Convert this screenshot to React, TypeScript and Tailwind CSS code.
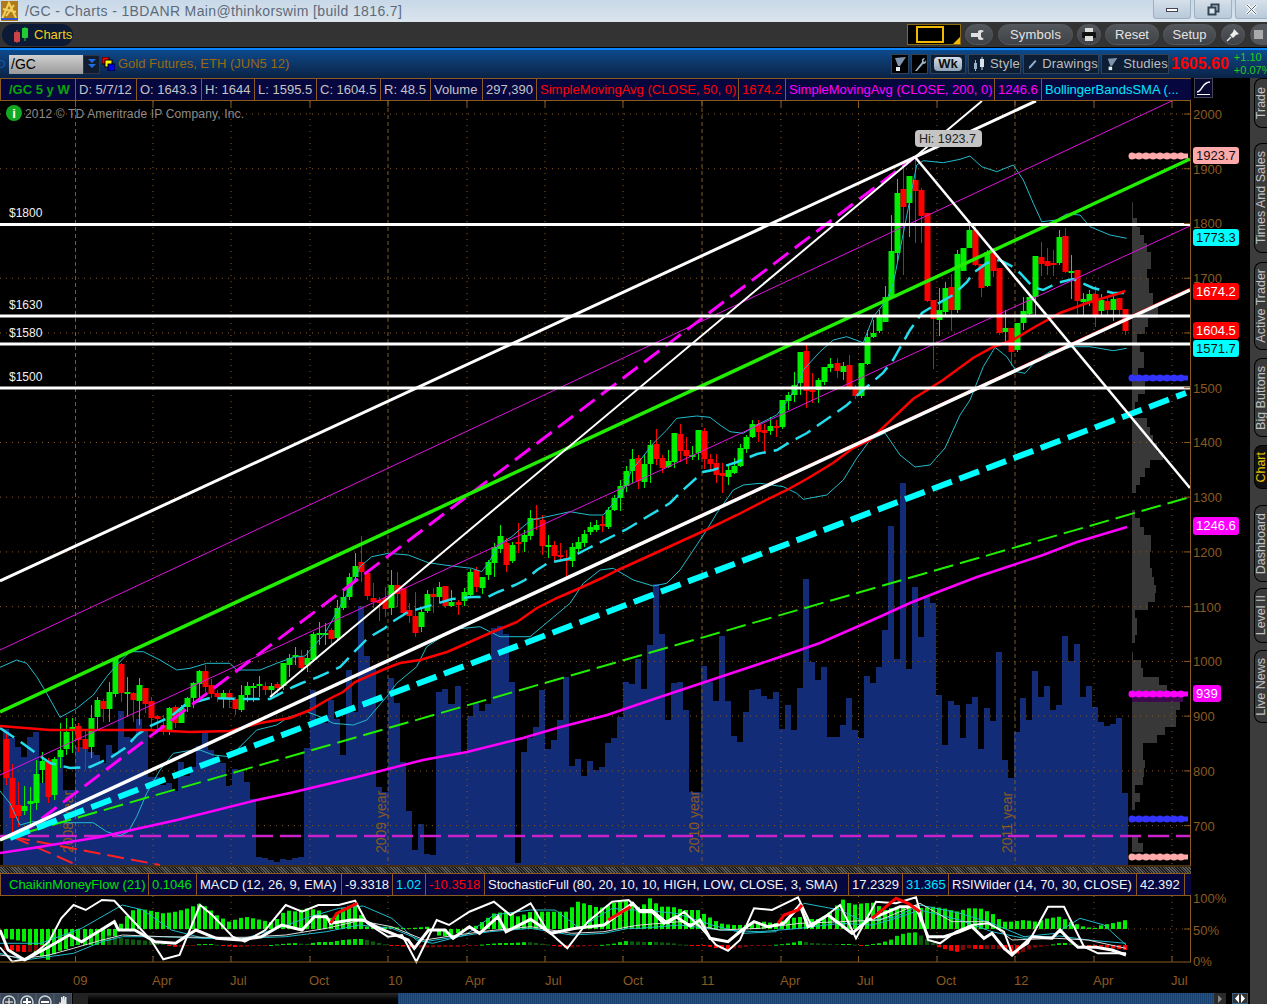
import type { ReactNode } from 'react'

// [up, bodyTop, bodyBottom, wickTop, wickBottom], one row per weekly bar, in screen y
const candles: number[][] = [
  [0,739,778,733,785],[0,778,818,764,833],[0,805,816,782,827],[1,806,811,786,815],[1,801,804,787,827],[1,774,803,760,810],
  [1,761,770,752,783],[0,760,797,758,803],[1,759,795,757,800],[1,750,757,723,768],[1,732,749,718,755],[1,727,731,718,753],
  [0,726,740,723,752],[0,739,749,730,770],[1,718,747,705,758],[1,700,717,697,730],[0,701,709,699,722],[1,692,709,682,722],
  [1,658,694,657,697],[0,664,693,663,702],[1,692,694,677,717],[0,693,700,692,722],[1,685,701,678,725],[0,688,704,688,713],
  [0,701,718,697,730],[0,716,719,715,733],[0,725,732,715,735],[1,708,732,707,735],[0,707,723,705,728],[1,708,723,705,723],
  [1,698,707,697,712],[1,683,698,682,708],[1,671,684,670,698],[0,671,687,665,692],[0,685,694,679,698],[0,693,697,690,702],
  [1,693,699,690,708],[0,693,699,690,708],[0,699,709,697,715],[1,695,710,685,712],[1,686,695,682,702],[1,686,688,683,702],
  [1,684,686,676,697],[0,686,690,682,695],[1,686,690,683,697],[0,684,688,682,697],[1,663,686,663,690],[1,658,665,654,677],
  [1,655,657,647,665],[0,657,668,650,672],[1,658,665,650,672],[1,634,660,632,662],[1,633,635,622,645],[1,633,635,623,645],
  [0,630,639,628,646],[1,608,638,600,640],[1,597,608,590,610],[1,577,597,573,600],[1,566,577,553,580],[0,562,572,536,582],
  [0,573,596,570,600],[0,598,602,583,608],[0,600,603,597,621],[0,598,609,587,617],[1,585,608,570,615],[0,585,594,572,607],
  [0,588,613,588,614],[0,610,616,603,623],[0,616,633,592,637],[1,612,627,608,632],[1,594,611,590,613],[0,594,597,588,613],
  [1,587,597,582,603],[0,586,606,586,608],[1,602,606,590,607],[0,602,605,600,615],[1,592,601,588,606],[1,572,595,569,597],
  [0,570,587,567,592],[1,577,588,577,594],[1,562,575,560,580],[1,547,563,543,577],[1,536,549,525,553],[0,543,565,538,572],
  [1,545,561,542,563],[0,542,543,523,553],[1,535,542,530,552],[1,518,536,510,540],[0,518,520,505,530],[0,520,546,515,555],
  [1,545,547,535,558],[0,545,556,541,562],[0,555,557,543,562],[0,558,561,550,577],[1,547,561,543,567],[1,542,549,537,552],
  [1,534,543,530,547],[1,527,532,522,535],[1,525,530,520,532],[0,524,526,516,532],[1,510,527,507,529],[1,498,510,495,511],
  [1,486,498,480,511],[1,471,486,466,492],[1,459,471,449,483],[0,458,481,455,489],[1,464,482,455,488],[1,445,464,440,483],
  [0,444,459,429,465],[0,458,468,455,473],[1,461,467,450,468],[1,433,462,433,468],[0,434,451,424,462],[0,450,456,437,464],
  [1,455,457,446,460],[1,430,453,430,460],[0,431,459,428,469],[0,459,464,454,470],[0,463,475,454,483],[0,473,476,463,493],
  [1,470,477,466,485],[1,466,473,458,474],[1,448,466,444,467],[1,437,449,435,453],[1,424,437,420,438],[0,424,432,420,442],
  [0,430,433,424,452],[1,426,431,417,435],[0,426,427,420,437],[1,400,427,400,429],[1,395,401,392,410],[1,385,395,372,402],
  [1,352,383,352,395],[0,351,391,345,408],[0,390,392,373,403],[1,380,390,378,403],[1,367,382,367,385],[1,364,368,358,372],
  [0,363,371,358,378],[1,366,372,362,380],[0,365,387,355,390],[0,389,396,385,399],[1,363,396,363,398],[1,337,364,330,365],
  [1,333,337,320,338],[1,317,331,310,333],[1,297,322,286,322],[1,251,298,215,298],[1,193,253,179,262],[0,189,207,167,275],
  [1,176,203,176,237],[0,180,191,159,243],[0,190,216,188,243],[0,213,301,213,302],[0,300,319,300,369],[1,310,320,288,336],
  [1,288,312,282,315],[0,287,310,274,331],[1,254,310,250,313],[1,248,271,248,271],[1,230,248,225,248],[0,230,265,225,266],
  [0,264,288,264,297],[1,252,286,250,287],[0,253,271,248,277],[0,268,333,268,335],[1,328,332,310,342],[0,328,352,328,366],
  [1,323,350,323,352],[1,311,323,297,330],[1,297,314,297,316],[1,256,297,256,315],[0,257,264,242,276],[0,261,266,248,275],
  [0,263,265,250,276],[1,237,263,230,265],[0,236,272,228,273],[1,271,273,255,299],[0,270,301,270,314],[1,299,302,293,315],
  [1,294,302,290,306],[0,294,315,286,327],[1,300,311,294,315],[0,301,310,298,315],[1,299,310,293,321],[0,298,310,298,316],
  [0,309,331,309,335],
]

const volumeTops: number[] = [
  729,738,747,757,737,732,783,763,766,757,790,790,747,748,752,755,763,745,753,711,737,738,719,730,777,777,785,783,791,762,776,767,
  746,733,750,757,763,786,769,771,782,799,857,858,860,862,859,860,858,857,748,690,719,723,700,719,755,670,712,606,656,668,787,792,
  678,703,762,811,850,824,854,855,692,689,704,686,752,716,703,711,704,628,626,634,682,863,752,738,727,690,749,740,720,677,766,759,
  776,761,770,767,743,738,717,682,684,659,689,645,584,634,720,683,682,710,792,792,666,682,701,
  636,701,736,742,712,690,689,696,699,692,729,705,730,688,579,662,680,667,737,737,725,698,730,738,676,683,667,630,526,659,483,669,
  587,637,597,603,695,745,701,705,738,704,697,749,708,721,652,760,778,732,698,720,671,697,686,710,705,636,661,644,697,686,707,722,
  726,724,718,793,
]

type P = [number, number]

const xOf = (k: number) => 6.3 + 6.016 * k
const scaled = (list: number[][], dx: number, sx: number, dy: number): P[] =>
  list.map(([c, p]) => [dx + c / sx, dy + p / 3])
const toPoints = (list: P[]) => list.map(([x, y]) => `${x.toFixed(1)},${y.toFixed(1)}`).join(' ')
const interp = (list: P[], x: number) => {
  if (x <= list[0][0]) return list[0][1]
  for (let i = 1; i < list.length; i++) {
    if (x <= list[i][0]) {
      const t = (x - list[i - 1][0]) / (list[i][0] - list[i - 1][0])
      return list[i - 1][1] + (list[i][1] - list[i - 1][1]) * t
    }
  }
  return list[list.length - 1][1]
}

const sma50: P[] = [
  [0,726],[50,730],[150,730],[190,732],[230,731],[260,723],[290,718],[310,710],[327,700],[343,692],[355,682],[387,668],[400,663],[420,660],
  [447,652],[463,645],[490,633],[517,622],[537,608],[557,598],[580,588],[602,578],[618,570],[640,560],[708,529],[737,515],[770,498],[787,490],
  [810,477],[833,463],[853,448],[870,440],[913,399],[943,380],[973,358],[993,347],[1013,340],[1033,328],[1060,313],[1087,303],[1117,294],[1125,291],
]
const sma200: P[] = [
  [0,853],[33,848],[100,837],[177,820],[257,800],[290,793],[357,777],[423,760],[467,752],[523,738],[557,728],[607,715],[657,698],[720,677],
  [777,658],[820,643],[877,618],[910,603],[943,590],[977,577],[1010,566],[1043,555],[1077,542],[1127,527],
]
const midBand: P[] = [
  [0,728],[18,740],[40,756],[50,763],[70,768],[90,767],[110,758],[125,748],[137,735],[150,726],[170,717],[185,705],[210,698],[240,699],[270,699],[293,687],
  [302,683],[318,677],[340,667],[358,648],[368,638],[385,628],[392,622],[408,612],[432,605],[452,599],[472,597],[488,597],[498,592],[515,585],[525,580],
  [537,570],[548,563],[568,559],[585,550],[627,529],[645,518],[662,508],[670,503],[683,490],[703,472],[713,470],[737,462],[757,454],[777,450],[790,442],
  [807,433],[830,417],[847,405],[863,390],[883,373],[893,360],[910,330],[922,313],[930,308],[953,295],[967,282],[973,273],[987,263],[1000,260],[1013,267],
  [1020,273],[1033,287],[1043,290],[1057,283],[1073,279],[1093,288],[1113,293],[1127,293],
]
const upperBand: P[] = [
  ...scaled([[0,82],[50,60],[80,70],[110,110],[140,160],[180,232],[230,205],[280,165],[320,110],[350,75],[390,35],[430,35],[480,60],[530,90],[570,85],[620,70],[690,70],[710,90],[780,90],[830,70],[880,52]], 0, 3, 640),
  ...scaled([[60,408],[120,340],[170,250],[200,200],[225,140],[260,110],[310,100],[370,105],[430,128],[500,138],[560,145],[590,155],[610,130],[640,75],[680,50],[720,15],[740,0]], 285, 3, 520),
  ...scaled([[0,545],[60,555],[100,555],[130,520],[160,480],[185,420],[215,385],[250,340],[290,300],[320,265],[380,258],[420,262],[450,285],[480,305],[520,310],[560,285],[620,255],[650,215],[680,170],[700,120],[750,65],[790,30],[830,20],[880,38]], 570, 3, 330),
  ...scaled([[40,530],[80,480],[100,430],[130,280],[170,75],[190,62],[250,68],[300,58],[330,48],[365,80],[410,95],[460,75],[490,120],[520,190],[545,245],[590,240],[620,222],[660,225],[690,260],[750,285],[800,295]], 860, 3, 140),
]
const lowerBand: P[] = [
  ...scaled([[0,453],[30,490],[60,555],[95,545],[190,548],[280,548],[320,575],[360,587],[385,575],[410,530],[440,460],[480,390],[520,340],[560,333],[600,330],[640,345],[690,350],[770,270],[830,255],[860,235]], 0, 3, 640),
  ...scaled([[0,470],[50,455],[90,470],[130,490],[190,495],[230,480],[290,410],[320,370],[380,320],[410,260],[490,208],[570,200],[630,230],[720,230],[780,180],[840,130],[880,70],[930,30],[970,25],[1030,60],[1090,78],[1130,70],[1170,30],[1190,0]], 290, 3, 560),
  ...scaled([[410,600],[440,550],[490,480],[520,465],[570,460],[640,470],[680,490],[700,508],[770,495],[820,450],[860,385],[900,330]], 570, 3, 330),
  [885,433],[900,455],[915,467],[930,465],[945,448],[960,415],[970,400],
  ...scaled([[370,680],[405,622],[440,650],[470,695],[495,700],[530,660],[570,635],[640,620],[690,620],[760,632],[800,625]], 860, 3, 140),
]

// lower study panel: zoom coordinates split in two halves of the window
const both = (left: number[][], right: number[][]): P[] => [...scaled(left, 0, 2.45, 860), ...scaled(right, 640, 2.5, 860)]

const cmf = both(
  [[10,235],[40,240],[60,245],[90,280],[118,300],[140,275],[170,265],[200,240],[240,235],[280,230],[300,180],[330,145],[360,150],[400,160],[430,155],[460,145],[490,130],[510,145],[530,165],[560,185],[600,170],[640,180],[670,188],[700,150],[720,155],[750,145],[780,150],[810,175],[840,145],[870,130],[900,200],[950,200],[1000,205],[1050,200],[1080,230],[1110,225],[1140,210],[1170,195],[1210,160],[1240,155],[1270,170],[1300,155],[1390,155],[1415,125],[1445,135],[1470,145],[1500,130],[1540,120]],
  [[0,145],[25,115],[50,140],[80,140],[110,150],[145,150],[165,165],[200,190],[230,195],[270,195],[310,185],[340,190],[370,175],[410,170],[440,180],[470,165],[505,118],[530,135],[555,130],[585,128],[610,150],[640,140],[660,145],[690,145],[730,140],[760,145],[790,155],[820,145],[850,145],[880,160],[905,185],[930,185],[960,180],[990,185],[1020,175],[1050,170],[1075,185],[1110,200],[1135,205],[1155,195],[1180,190],[1200,185],[1215,180]],
)
const macd: P[] = [
  ...[[25,-5],[50,-7],[75,-7],[100,-5],[120,4],[140,5],[200,8],[230,8],[260,10],[280,8],[310,6],[340,5],[370,4],[400,1],[430,-2],[460,-1],[490,1],[520,1],[570,-2],[590,-2],[620,-1],[650,-0.5],[690,1],[720,2],[750,1],[780,3],[810,3],[840,5],[870,6],[890,6],[920,3],[950,0],[980,-1],[1010,-3],[1050,-2.5],[1090,-2],[1120,-2],[1145,-1],[1195,1],[1225,2],[1255,2],[1290,3],[1315,2],[1360,-0.5],[1385,-3],[1410,-2],[1440,-1],[1500,1],[1530,4]].map(([c, v]): P => [c / 2.45, v]),
  ...[[10,3],[40,3],[80,2],[100,0.5],[160,-0.5],[190,-3],[220,-4],[250,-3],[280,-1],[350,0.5],[380,2],[400,4],[430,2],[480,1],[530,1],[550,-1],[580,1],[600,2],[625,5],[645,10],[665,12],[685,13],[700,10],[725,4],[745,-2],[760,-4],[780,-6],[795,-7],[820,-3],[840,-4],[905,-4],[920,-7],[935,-9],[960,-7],[980,-3],[1000,-2],[1050,2],[1075,2],[1100,0],[1140,-1],[1215,-5]].map(([c, v]): P => [640 + c / 2.5, v]),
]
const stoch = both(
  [[0,262],[30,305],[60,298],[90,275],[120,245],[150,175],[180,135],[210,150],[250,120],[280,122],[320,175],[370,240],[400,298],[440,285],[490,135],[520,165],[570,230],[600,245],[650,210],[700,135],[740,155],[780,135],[830,135],[870,122],[900,190],[950,230],[985,225],[1020,305],[1070,180],[1100,195],[1150,155],[1210,125],[1250,165],[1300,130],[1340,210],[1390,265],[1440,185],[1500,125],[1540,120]],
  [[0,150],[30,150],[70,190],[110,155],[150,200],[190,255],[220,272],[250,240],[285,145],[330,150],[395,112],[430,200],[500,135],[540,235],[590,125],[640,130],[690,112],[720,240],[750,250],[790,215],[830,195],[870,190],[910,215],[930,280],[970,250],[1020,140],[1060,140],[1110,260],[1145,280],[1180,280],[1215,280]],
)
const rsi = both(
  [[0,210],[20,270],[60,300],[120,260],[170,225],[200,245],[240,215],[280,185],[290,210],[330,210],[380,245],[430,250],[480,210],[530,235],[590,240],[640,230],[690,195],[740,210],[770,170],[800,170],[810,190],[860,180],[890,180],[930,205],[1000,240],[1015,265],[1050,210],[1090,210],[1110,235],[1150,200],[1175,220],[1220,170],[1240,215],[1300,178],[1350,220],[1410,205],[1480,195],[1550,130]],
  [[0,155],[30,155],[60,190],[90,170],[125,198],[150,180],[175,235],[220,245],[255,210],[285,185],[320,200],[360,190],[400,135],[420,200],[470,165],[530,220],[570,180],[650,140],[690,140],[720,230],[760,230],[800,215],[830,200],[860,235],[880,220],[910,265],[930,285],[980,230],[1030,235],[1050,210],[1070,235],[1095,262],[1140,262],[1180,270],[1215,285]],
)
const cyanA = both(
  [[0,250],[100,250],[200,205],[300,135],[350,150],[420,210],[500,235],[600,235],[680,205],[760,170],[830,145],[890,138],[960,175],[1020,240],[1060,250],[1140,225],[1210,165],[1300,150],[1360,150],[1420,205],[1500,145],[1540,150]],
  [[0,150],[90,160],[180,195],[260,220],[340,215],[410,130],[500,150],[560,185],[640,170],[700,135],[800,160],[880,190],[960,230],[1040,220],[1100,175],[1160,195],[1215,255]],
)
const cyanB = both(
  [[0,280],[60,300],[120,290],[180,280],[250,245],[300,230],[400,230],[500,235],[600,235],[700,230],[800,215],[880,195],[960,205],[1040,245],[1120,230],[1200,215],[1300,205],[1400,225],[1480,220],[1540,205]],
  [[0,205],[100,195],[200,210],[300,215],[400,205],[500,190],[580,195],[640,175],[700,150],[800,180],[880,215],[960,235],[1050,228],[1120,240],[1215,250]],
)
const thinWhite = both(
  [[0,285],[60,295],[120,285],[180,265],[250,240],[300,225],[400,230],[500,232],[600,232],[700,225],[800,205],[880,182],[960,200],[1040,240],[1120,225],[1200,212],[1300,200],[1400,220],[1480,215],[1540,200]],
  [[0,195],[100,185],[200,210],[300,205],[400,190],[500,185],[600,180],[700,130],[780,185],[870,185],[930,240],[1040,235],[1120,240],[1215,265]],
)
const redRuns: P[][] = [
  scaled([[810,190],[825,160],[875,130]], 0, 2.45, 860),
  scaled([[1490,180],[1545,140]], 0, 2.45, 860),
  scaled([[345,190],[360,165],[395,150],[405,135]], 640, 2.5, 860),
  scaled([[580,175],[640,115],[670,130],[700,155]], 640, 2.5, 860),
]

// volume profile at the right edge of the price panel: [top, bottom, right]
const profile: number[][] = [
  [202,218,1133],[218,227,1137],[227,235,1140],[235,243,1144],[243,252,1147],[252,260,1151],[260,269,1151],[269,278,1147],[278,293,1149],[293,305,1153],[305,318,1158],
  [318,327,1148],[327,334,1145],[334,343,1137],[343,352,1140],[352,368,1144],[368,377,1138],[377,394,1145],[394,402,1138],[402,410,1135],[418,427,1147],[427,435,1150],
  [435,443,1153],[443,452,1157],[452,460,1163],[460,468,1150],[468,477,1145],[477,485,1140],[485,493,1136],[510,518,1135],[518,527,1140],[527,535,1144],[535,552,1151],
  [552,568,1150],[568,577,1152],[577,585,1154],[585,593,1156],[593,602,1155],[602,610,1148],[610,618,1135],[618,635,1137],[635,643,1135],[652,660,1133],[660,668,1141],
  [668,677,1143],[677,685,1159],[685,693,1167],[701,710,1180],[710,718,1176],[718,727,1176],[727,735,1165],[735,743,1157],[743,760,1143],[760,768,1145],[768,777,1144],
  [777,785,1143],[785,793,1135],[793,802,1140],[802,810,1135],[837,843,1138],[843,852,1143],
]

const gridX = [75.5, 153, 231, 310, 388, 467, 545, 623, 702, 781, 858.5, 937, 1015, 1094, 1172]
const yearX = [75.5, 388, 702, 1015]
const priceLevels = [2000, 1900, 1800, 1700, 1600, 1500, 1400, 1300, 1200, 1100, 1000, 900, 800, 700]
const yOfPrice = (p: number) => 114 + (2000 - p) * 0.5474

const badges = [
  { y: 147, h: 17, w: 46, bg: '#ffaaaa', fg: '#111', label: '1923.7' },
  { y: 229, h: 17, w: 46, bg: '#00ffff', fg: '#111', label: '1773.3' },
  { y: 283, h: 17, w: 46, bg: '#ff0000', fg: '#fff', label: '1674.2' },
  { y: 322, h: 17, w: 46, bg: '#ff0000', fg: '#fff', label: '1604.5' },
  { y: 340, h: 17, w: 46, bg: '#00ffff', fg: '#111', label: '1571.7' },
  { y: 517, h: 18, w: 46, bg: '#ff00ff', fg: '#fff', label: '1246.6' },
  { y: 685, h: 17, w: 28, bg: '#ff00ff', fg: '#fff', label: '939' },
]
const dotRows = [
  { y: 156, color: '#ffaaaa' },
  { y: 378, color: '#3333ff' },
  { y: 694, color: '#ff00ff' },
  { y: 819, color: '#3333ff' },
  { y: 857, color: '#ffaaaa' },
]
const levelLabels = [
  { y: 217, label: '$1800' },
  { y: 309, label: '$1630' },
  { y: 337, label: '$1580' },
  { y: 381, label: '$1500' },
]

function Cell({ className, children }: { className: string; children: ReactNode }) {
  return (
    <div className={`flex h-full shrink-0 items-center whitespace-nowrap border-r border-[#8a5a20] pl-[3px] text-[13px] ${className}`}>
      {children}
    </div>
  )
}

function Pill({ className, children }: { className: string; children: ReactNode }) {
  return (
    <div className={`flex h-[21px] shrink-0 items-center justify-center rounded-full border border-[#55595f] bg-gradient-to-b from-[#53565b] to-[#3f4246] text-[13px] text-[#e4e4e4] ${className}`}>
      {children}
    </div>
  )
}

function ToolButton({ className, children }: { className: string; children: ReactNode }) {
  return (
    <div className={`flex h-[20px] shrink-0 items-center gap-[5px] border border-[#2f4258] bg-[#0d1d33] pl-[4px] text-[13px] tracking-[0.2px] text-[#bdbdbd] ${className}`}>
      {children}
    </div>
  )
}

function SideTab({ className, active, label }: { className: string; active?: boolean; label: string }) {
  return (
    <div className={`ml-[4px] flex w-[13px] shrink-0 items-center justify-center rounded-l-lg border-y border-l border-black ${active ? 'bg-[#111]' : 'bg-[#3a3a3a]'} ${className}`}>
      <span className={`rotate-180 whitespace-nowrap text-[12.5px] leading-none [writing-mode:vertical-rl] ${active ? 'text-[#e8c400]' : 'text-[#c2c2c2]'}`}>
        {label}
      </span>
    </div>
  )
}

function StudyIcon() {
  return (
    <svg width="14" height="16" viewBox="0 0 14 16">
      <path d="M2 2 L13 1 L7 10 L5 10 Z" fill="#7f95ad" />
      <rect x="3" y="11" width="4" height="4" fill="#e6eef2" />
    </svg>
  )
}

function PriceChart() {
  return (
    <svg className="block shrink-0" width={1250} height={766} viewBox="0 101 1250 766" fontFamily="Liberation Sans">
      {/* volume */}
      {volumeTops.map((top, k) => {
        const x = Math.round(xOf(k) - 3)
        return <rect key={k} x={x} y={top} width={Math.round(xOf(k + 1) - 3) - x} height={865 - top} fill="#122c78" />
      })}
      {/* profile */}
      {profile.map(([t, b, r]) => (
        <rect key={t} x={1132} y={t} width={r - 1132} height={b - t} fill="#383838" />
      ))}
      <rect x={1132} y={694} width={51} height={8} fill="#3d0b4d" />
      {/* grid */}
      {priceLevels.map((p) => (
        <line key={p} x1={0} x2={1190} y1={yOfPrice(p)} y2={yOfPrice(p)} stroke="#8a5a20" strokeDasharray="1 5" />
      ))}
      {gridX.map((x) => (
        <g key={x}>
          <line x1={x} x2={x} y1={101} y2={865} stroke={yearX.includes(x) ? '#7a5a28' : '#8a5a20'} strokeDasharray={yearX.includes(x) ? '4 3' : '1 5'} />
          <line x1={x} x2={x} y1={101} y2={107} stroke="#8a5a20" />
        </g>
      ))}
      {/* year marks */}
      {[
        { x: 73, label: '2008 year' },
        { x: 386, label: '2009 year' },
        { x: 699, label: '2010 year' },
        { x: 1012, label: '2011 year' },
      ].map((m) => (
        <text key={m.x} x={m.x} y={853} fontSize={14} fill="#8a5a20" transform={`rotate(-90 ${m.x} 853)`}>
          {m.label}
        </text>
      ))}
      <line x1={0} x2={1190} y1={836} y2={836} stroke="#cc22cc" strokeWidth={2.5} strokeDasharray="21 7" />
      <polyline points="13,837 77,865" fill="none" stroke="#ff2020" strokeWidth={2} strokeDasharray="17 7" />
      <polyline points="13,837 160,865" fill="none" stroke="#ff2020" strokeWidth={2} strokeDasharray="17 7" />
      {/* bars */}
      {candles.map(([up, top, bottom, wickTop, wickBottom], k) => {
        const color = up ? '#00ee00' : '#ff0000'
        const x = Math.round(xOf(k))
        return (
          <g key={k}>
            <rect x={x} y={wickTop} width={1} height={wickBottom - wickTop} fill={color} />
            <rect x={x - 2.5} y={top} width={6} height={Math.max(bottom - top, 2)} fill={color} />
          </g>
        )
      })}
      {/* studies */}
      <polyline points={toPoints(upperBand)} fill="none" stroke="#22bbcc" strokeWidth={1} />
      <polyline points={toPoints(lowerBand)} fill="none" stroke="#22bbcc" strokeWidth={1} />
      <polyline points={toPoints(midBand)} fill="none" stroke="#22ddee" strokeWidth={2.5} strokeDasharray="17 8" />
      <polyline points={toPoints(sma50)} fill="none" stroke="#ff0000" strokeWidth={2.5} />
      <polyline points={toPoints(sma200)} fill="none" stroke="#ff00ff" strokeWidth={2.5} />
      {/* channels */}
      <line x1={0} y1={650} x2={1178} y2={98} stroke="#dd11dd" strokeWidth={1} />
      <line x1={0} y1={775} x2={1190} y2={226} stroke="#dd11dd" strokeWidth={1} />
      <line x1={20} y1={835} x2={915} y2={157} stroke="#ff00ff" strokeWidth={3} strokeDasharray="19 8" />
      <line x1={0} y1={840} x2={1190} y2={497} stroke="#22ee00" strokeWidth={2} strokeDasharray="20 7" />
      <line x1={10} y1={838} x2={1186} y2={393} stroke="#00ffff" strokeWidth={6} strokeDasharray="21 8" />
      <line x1={0} y1={712} x2={1190} y2={159} stroke="#22ee00" strokeWidth={3.5} />
      <line x1={0} y1={581} x2={1036} y2={101} stroke="#ffffff" strokeWidth={3} />
      <line x1={270} y1={697} x2={982} y2={101} stroke="#ffffff" strokeWidth={2} />
      <line x1={600} y1={562} x2={1190} y2={288.5} stroke="#ff0000" strokeWidth={1.5} />
      <line x1={0} y1={840} x2={1190} y2={290} stroke="#ffffff" strokeWidth={3.5} />
      <line x1={915} y1={157} x2={1190} y2={488} stroke="#ffffff" strokeWidth={2.5} />
      {/* levels */}
      {[224.5, 316, 344, 388].map((y) => (
        <line key={y} x1={0} x2={1190} y1={y} y2={y} stroke="#ffffff" strokeWidth={3} />
      ))}
      {levelLabels.map((l) => (
        <text key={l.label} x={9} y={l.y} fontSize={12} fill="#f0f0f0">
          {l.label}
        </text>
      ))}
      {/* copyright */}
      <circle cx={14} cy={113} r={8} fill="#11a822" />
      <text x={14} y={118} fontSize={13} fontWeight={700} fill="#fff" textAnchor="middle">i</text>
      <text x={25} y={118} fontSize={12} fill="#8c8c8c" letterSpacing={0.15}>2012 © TD Ameritrade IP Company, Inc.</text>
      {/* high marker */}
      <rect x={915} y={130} width={67} height={17} rx={4} fill="#c4c4c4" />
      <text x={919} y={143} fontSize={12.5} fill="#222">Hi: 1923.7</text>
      {/* axis */}
      <line x1={1190.5} x2={1190.5} y1={101} y2={866} stroke="#8a5a20" />
      <line x1={0} x2={1191} y1={866} y2={866} stroke="#8a5a20" />
      {priceLevels.map((p) => (
        <g key={p}>
          <line x1={1184} x2={1190} y1={yOfPrice(p)} y2={yOfPrice(p)} stroke="#8a5a20" />
          <text x={1193} y={yOfPrice(p) + 5} fontSize={13} fill="#8a5a20">{p}</text>
        </g>
      ))}
      {dotRows.map((d) => (
        <line key={d.y} x1={1132} x2={1188} y1={d.y} y2={d.y} stroke={d.color} strokeWidth={7} strokeLinecap="round" strokeDasharray="0 7" />
      ))}
      {dotRows.map((d) => (
        <line key={d.y} x1={1132} x2={1188} y1={d.y} y2={d.y} stroke={d.color} strokeWidth={5} />
      ))}
      {badges.map((b) => (
        <g key={b.label}>
          <rect x={1193} y={b.y} width={b.w} height={b.h} rx={3} fill={b.bg} />
          <text x={1196} y={b.y + 13} fontSize={13} fill={b.fg}>{b.label}</text>
        </g>
      ))}
    </svg>
  )
}

function StudyPanel() {
  const bottomLabels = [
    { x: 73, label: '09' }, { x: 152, label: 'Apr' }, { x: 230, label: 'Jul' }, { x: 309, label: 'Oct' }, { x: 388, label: '10' },
    { x: 465, label: 'Apr' }, { x: 545, label: 'Jul' }, { x: 623, label: 'Oct' }, { x: 701, label: '11' }, { x: 780, label: 'Apr' },
    { x: 857, label: 'Jul' }, { x: 936, label: 'Oct' }, { x: 1014, label: '12' }, { x: 1093, label: 'Apr' }, { x: 1171, label: 'Jul' },
  ]
  return (
    <svg className="block shrink-0 overflow-visible" width={1250} height={97} viewBox="0 896 1250 97" fontFamily="Liberation Sans">
      <line x1={0} x2={1190} y1={929} y2={929} stroke="#8a5a20" strokeDasharray="1 5" />
      {gridX.map((x) => (
        <line key={x} x1={x} x2={x} y1={896} y2={962} stroke="#8a5a20" strokeDasharray="1 5" />
      ))}
      {candles.map((_, k) => {
        const x = xOf(k)
        const top = interp(cmf, x)
        return <rect key={k} x={Math.round(x) - 2} y={Math.min(top, 929)} width={4} height={Math.abs(top - 929)} fill="#00ee00" />
      })}
      {candles.map((_, k) => {
        const x = xOf(k)
        const v = interp(macd, x)
        const rising = v >= interp(macd, x - 6)
        const color = v >= 0 ? (rising ? '#00dd00' : '#0b5a0b') : rising ? '#7a0606' : '#ff0000'
        const h = Math.abs(v)
        return <rect key={k} x={Math.round(x) - 2} y={v >= 0 ? 945 - h : 945} width={4} height={Math.max(h, 1)} fill={color} />
      })}
      <polyline points={toPoints(cyanA)} fill="none" stroke="#22bbcc" strokeWidth={1} />
      <polyline points={toPoints(cyanB)} fill="none" stroke="#22bbcc" strokeWidth={1} />
      <polyline points={toPoints(thinWhite)} fill="none" stroke="#dddddd" strokeWidth={1} />
      <polyline points={toPoints(stoch)} fill="none" stroke="#ffffff" strokeWidth={2} />
      <polyline points={toPoints(rsi)} fill="none" stroke="#ffffff" strokeWidth={3} />
      {redRuns.map((run, i) => (
        <polyline key={i} points={toPoints(run)} fill="none" stroke="#ff0000" strokeWidth={3} />
      ))}
      <line x1={1190.5} x2={1190.5} y1={896} y2={962} stroke="#8a5a20" />
      <line x1={0} x2={1191} y1={962} y2={962} stroke="#8a5a20" />
      <line x1={1184} x2={1190} y1={929} y2={929} stroke="#8a5a20" />
      <text x={1193} y={903} fontSize={13} fill="#8a5a20">100%</text>
      <text x={1193} y={935} fontSize={13} fill="#8a5a20">50%</text>
      <text x={1193} y={966} fontSize={13} fill="#8a5a20">0%</text>
      {gridX.map((x) => (
        <line key={x} x1={x} x2={x} y1={956} y2={962} stroke="#8a5a20" />
      ))}
      {bottomLabels.map((l) => (
        <text key={l.x} x={l.x} y={985} fontSize={13} fill="#8a5a20">{l.label}</text>
      ))}
    </svg>
  )
}

function ScrollIcon({ kind }: { kind: 'cross' | 'plus' | 'minus' | 'hand' }) {
  return (
    <div className="flex h-[15px] w-[18px] shrink-0 items-start justify-center border border-[#445466] bg-[#3c4652] pt-[1px]">
      <svg width="14" height="14" viewBox="0 0 14 14">
        {kind === 'hand' ? (
          <path d="M4 13 L3 7 L5 8 L5 2 H6.5 V6 L7 1 H8.5 V6 L9 2 H10.5 V8 L11 13 Z" fill="#e8e8e8" />
        ) : (
          <>
            <circle cx="7" cy="7" r="6" fill="none" stroke="#c8d4e0" strokeWidth="1.5" />
            {kind !== 'minus' && <path d="M7 3 V11" stroke="#fff" strokeWidth={kind === 'plus' ? 2 : 1} />}
            <path d="M3 7 H11" stroke="#fff" strokeWidth={kind === 'cross' ? 1 : 2} />
          </>
        )}
      </svg>
    </div>
  )
}

export default function App() {
  return (
    <div className="flex h-[1004px] w-[1267px] flex-col overflow-hidden bg-black font-['Liberation_Sans',sans-serif]">
      {/* window title */}
      <div className="flex h-[22px] shrink-0 items-center bg-gradient-to-b from-[#c8d8e8] to-[#dbe5ee]">
        <svg className="ml-[1px] shrink-0" width="17" height="20" viewBox="0 0 17 20">
          <rect width="17" height="20" fill="#b07a18" />
          <path d="M1 18 L8 2 L15 17 M2 8 L15 11 M5 15 L13 4" stroke="#f2d060" strokeWidth="2" fill="none" />
          <path d="M0 18 L17 18" stroke="#3355cc" strokeWidth="2" />
        </svg>
        <span className="ml-[7px] text-[14px] tracking-[0.36px] text-[#5c6b7a]">/GC - Charts - 1BDANR Main@thinkorswim [build 1816.7]</span>
        <div className="ml-auto flex h-full items-start gap-[3px]">
          <div className="flex h-[19px] w-[38px] items-center justify-center rounded-b-[3px] border-x border-b border-[#9fb0c2] bg-gradient-to-b from-[#d5e0ea] to-[#b9c9d9]">
            <span className="mt-[2px] h-[4px] w-[12px] border border-[#445] bg-white" />
          </div>
          <div className="flex h-[19px] w-[38px] items-center justify-center rounded-b-[3px] border-x border-b border-[#9fb0c2] bg-gradient-to-b from-[#d5e0ea] to-[#b9c9d9]">
            <svg width="13" height="13" viewBox="0 0 13 13">
              <rect x="4.5" y="1.5" width="7" height="7" fill="none" stroke="#345" strokeWidth="2" />
              <rect x="1.5" y="4.5" width="7" height="7" fill="#dbe5ee" stroke="#345" strokeWidth="2" />
            </svg>
          </div>
          <div className="flex h-[19px] w-[32px] items-center justify-center rounded-bl-[3px] border-b border-l border-[#9fb0c2] bg-gradient-to-b from-[#d5e0ea] to-[#b9c9d9]">
            <svg width="13" height="13" viewBox="0 0 13 13">
              <path d="M2 2 L11 11 M11 2 L2 11" stroke="#fff" strokeWidth="3" />
              <path d="M2 2 L11 11 M11 2 L2 11" stroke="#567" strokeWidth="1" />
            </svg>
          </div>
        </div>
      </div>

      {/* main toolbar */}
      <div className="flex h-[25px] shrink-0 items-center bg-[#333333]">
        <div className="ml-[2px] flex h-[22px] w-[74px] items-center rounded-full bg-[#0c1a36]">
          <svg className="ml-[11px]" width="16" height="16" viewBox="0 0 16 16">
            <rect x="9" y="1" width="6" height="10" rx="1" fill="#22cc33" />
            <rect x="11.5" y="0" width="1" height="14" fill="#22cc33" />
            <rect x="1" y="5" width="6" height="10" rx="1" fill="#cc4444" />
            <rect x="3.5" y="3" width="1" height="13" fill="#cc4444" />
          </svg>
          <span className="ml-[5px] text-[13px] text-[#f5cf12]">Charts</span>
        </div>
        <div className="relative ml-[834px] flex h-[21px] w-[54px] shrink-0 items-center border border-[#8a6a10] bg-black">
          <div className="ml-[8px] h-[17px] w-[28px] border-2 border-[#f5b800]" />
          <svg className="absolute bottom-0 right-0" width="7" height="7" viewBox="0 0 7 7">
            <path d="M7 0 L7 7 L0 7 Z" fill="#f5b800" />
          </svg>
        </div>
        <Pill className="ml-[4px] w-[28px]">
          <svg width="16" height="10" viewBox="0 0 16 10">
            <path d="M0 3 H7 V1 Q10 -1 13 1 L10 3 L10 7 L13 9 Q10 11 7 9 V7 H0 Z" fill="#e0e0e0" />
          </svg>
        </Pill>
        <Pill className="ml-[5px] w-[75px] tracking-[0.2px]">Symbols</Pill>
        <Pill className="ml-[4px] w-[24px]">
          <svg width="14" height="13" viewBox="0 0 14 13">
            <rect x="3" y="0" width="8" height="4" fill="#ddd" />
            <rect x="0" y="4" width="14" height="6" rx="1" fill="#111" />
            <rect x="3" y="8" width="8" height="5" fill="#ddd" />
          </svg>
        </Pill>
        <Pill className="ml-[4px] w-[54px]">Reset</Pill>
        <Pill className="ml-[4px] w-[53px]">Setup</Pill>
        <Pill className="ml-[5px] w-[24px]">
          <svg width="14" height="14" viewBox="0 0 14 14">
            <path d="M8 1 L13 6 L10 7 L7 10 L4 7 L7 4 Z" fill="#eee" />
            <path d="M5 9 L1 13" stroke="#eee" strokeWidth="1.5" />
          </svg>
        </Pill>
        <div className="ml-[5px] flex h-[21px] w-[17px] shrink-0 items-center justify-center rounded-l-full bg-[#53565b]">
          <span className="block h-[9px] w-[9px] bg-[#aaa]" />
        </div>
      </div>
      <div className="h-[1px] shrink-0 bg-black" />
      <div className="h-[2px] shrink-0 bg-[#0a84ff]" />

      {/* symbol bar */}
      <div className="flex h-[28px] shrink-0 items-center bg-gradient-to-b from-[#0c4a8c] to-[#0a2346]">
        <span className="ml-[-3px] h-[8px] w-[8px] shrink-0 rounded-full border border-[#1a5bb0]" />
        <div className="ml-[4px] flex h-[19px] w-[74px] shrink-0 items-center bg-gradient-to-b from-[#cfcfcf] to-[#9a9a9a] pl-[2px] text-[14px] text-black">/GC</div>
        <div className="flex h-[19px] w-[17px] shrink-0 flex-col items-center justify-center border border-[#334] bg-[#111c30]">
          <svg width="10" height="12" viewBox="0 0 10 12">
            <path d="M1 1 H9 L5 5 Z M1 6 H9 L5 10 Z" fill="#1f6fe0" />
          </svg>
        </div>
        <svg className="ml-[2px] shrink-0" width="13" height="14" viewBox="0 0 13 14">
          <rect x="0" y="0" width="7" height="7" fill="#ff0000" stroke="#000" />
          <rect x="3" y="3" width="7" height="7" fill="#ffff00" stroke="#000" />
          <rect x="6" y="7" width="7" height="7" fill="#0000ee" stroke="#000" />
        </svg>
        <span className="ml-[3px] w-[170px] shrink-0 whitespace-nowrap text-[13px] text-[#9a6a10]">Gold Futures, ETH (JUN5 12)</span>
        <div className="ml-[603px] flex items-center gap-[2px]">
          <ToolButton className="w-[18px] bg-[#000] !pl-[1px]"><StudyIcon /></ToolButton>
          <ToolButton className="w-[17px] bg-[#000] !pl-[1px]">
            <svg width="14" height="15" viewBox="0 0 14 15">
              <path d="M2 14 L9 5 Q8 1 12 1 L10 4 L12 5 L13 3 Q14 7 10 7 L4 14 Z" fill="#9bb4cc" />
            </svg>
          </ToolButton>
          <div className="flex h-[20px] w-[36px] shrink-0 items-center justify-center border border-[#2f4258] bg-[#0d1d33]">
            <span className="rounded-[4px] bg-gradient-to-b from-[#d5dfe8] to-[#8ea4b8] px-[4px] text-[13px] font-bold leading-[14px] text-[#111]">Wk</span>
          </div>
          <ToolButton className="w-[53px]">
            <svg width="12" height="15" viewBox="0 0 12 15">
              <rect x="1" y="6" width="3" height="6" fill="#9bb4cc" /><rect x="2" y="3" width="1" height="11" fill="#9bb4cc" />
              <rect x="7" y="2" width="4" height="8" fill="#d9e2ea" /><rect x="8.5" y="0" width="1" height="13" fill="#d9e2ea" />
            </svg>
            Style
          </ToolButton>
          <ToolButton className="w-[76px]">
            <svg width="13" height="15" viewBox="0 0 13 15">
              <path d="M1 14 L2 10 L10 1 L12 3 L4 12 Z" fill="#8fb0d0" />
            </svg>
            Drawings
          </ToolButton>
          <ToolButton className="w-[68px]"><StudyIcon />Studies</ToolButton>
        </div>
        <span className="ml-[2px] text-[16px] font-bold text-[#ff0000]">1605.60</span>
        <div className="ml-[5px] flex flex-col text-[11px] leading-[13px] text-[#22cc22]">
          <span>+1.10</span>
          <span>+0.07%</span>
        </div>
      </div>

      <div className="flex min-h-0 flex-1">
        <div className="flex w-[1250px] shrink-0 flex-col">
          {/* study header */}
          <div className="flex h-[23px] shrink-0">
            <div className="flex h-full w-[1191px] shrink-0 border-y border-l border-[#8a5a20] bg-[#070740]">
              <Cell className="w-[75px] !pl-[8px] font-bold text-[#0aa30a]">/GC 5 y W</Cell>
              <Cell className="w-[61px] text-[#c4c4c4]">D: 5/7/12</Cell>
              <Cell className="w-[65px] text-[#c4c4c4]">O: 1643.3</Cell>
              <Cell className="w-[53px] text-[#c4c4c4]">H: 1644</Cell>
              <Cell className="w-[62px] text-[#c4c4c4]">L: 1595.5</Cell>
              <Cell className="w-[64px] text-[#c4c4c4]">C: 1604.5</Cell>
              <Cell className="w-[50px] text-[#c4c4c4]">R: 48.5</Cell>
              <Cell className="w-[52px] text-[#c4c4c4]">Volume</Cell>
              <Cell className="w-[54px] text-[#c4c4c4]">297,390</Cell>
              <Cell className="w-[202px] text-[#ff0000]">SimpleMovingAvg (CLOSE, 50, 0)</Cell>
              <Cell className="w-[47px] text-[#ff0000]">1674.2</Cell>
              <Cell className="w-[209px] text-[#ff00ff]">SimpleMovingAvg (CLOSE, 200, 0)</Cell>
              <Cell className="w-[47px] text-[#ff00ff]">1246.6</Cell>
              <Cell className="flex-1 border-r-0 text-[#00e5ff]">BollingerBandsSMA (...</Cell>
            </div>
            <div className="ml-[3px] flex h-[20px] w-[19px] items-center justify-center border border-[#445] bg-[#070730]">
              <svg width="15" height="16" viewBox="0 0 15 16">
                <path d="M1 12 C6 12 6 2 14 2" stroke="#fff" strokeWidth="1.5" fill="none" />
                <path d="M1 14.5 H14" stroke="#fff" strokeWidth="1" />
              </svg>
            </div>
          </div>

          <PriceChart />

          <div className="h-[6px] w-[1191px] shrink-0 bg-[repeating-linear-gradient(45deg,#5a5a5a_0,#5a5a5a_1px,#1c1c1c_1px,#1c1c1c_2px)]" />

          <div className="flex h-[23px] w-[1191px] shrink-0 border-y border-l border-[#8a5a20] bg-[#070740]">
            <Cell className="w-[148px] !pl-[8px] text-[#00e000]">ChaikinMoneyFlow (21)</Cell>
            <Cell className="w-[48px] text-[#00e000]">0.1046</Cell>
            <Cell className="w-[145px] text-[#f2f2f2]">MACD (12, 26, 9, EMA)</Cell>
            <Cell className="w-[51px] text-[#f2f2f2]">-9.3318</Cell>
            <Cell className="w-[33px] text-[#00e5ff]">1.02</Cell>
            <Cell className="w-[59px] text-[#ff0000]">-10.3518</Cell>
            <Cell className="w-[364px] text-[#f2f2f2]">StochasticFull (80, 20, 10, 10, HIGH, LOW, CLOSE, 3, SMA)</Cell>
            <Cell className="w-[54px] text-[#f2f2f2]">17.2329</Cell>
            <Cell className="w-[46px] text-[#00e5ff]">31.365</Cell>
            <Cell className="w-[188px] text-[#f2f2f2]">RSIWilder (14, 70, 30, CLOSE)</Cell>
            <Cell className="w-[48px] text-[#f2f2f2]">42.392</Cell>
          </div>

          <StudyPanel />

          {/* scroller */}
          <div className="flex h-[11px] shrink-0 overflow-hidden">
            <div className="flex h-full w-[73px] shrink-0 items-start">
              <ScrollIcon kind="cross" />
              <ScrollIcon kind="plus" />
              <ScrollIcon kind="minus" />
              <ScrollIcon kind="hand" />
            </div>
            <div className="h-full w-[15px] shrink-0 bg-[#222]" />
            <div className="h-full w-[310px] shrink-0 bg-gradient-to-b from-[#2a2a2a] to-black" />
            <div className="h-full w-[816px] shrink-0 bg-[repeating-linear-gradient(90deg,#1a4270_0,#1a4270_1px,#24527f_1px,#24527f_2px)]" />
            <div className="flex h-full w-[12px] shrink-0 items-center justify-center bg-[#2a2a2a]">
              <span className="h-0 w-0 border-y-[4px] border-l-[4px] border-y-transparent border-l-[#888]" />
            </div>
            <div className="ml-[6px] flex h-full w-[16px] shrink-0 items-center justify-center border border-[#3a5a7a] bg-[#333]">
              <svg width="10" height="9" viewBox="0 0 10 9">
                <path d="M4 0 L0 4.5 L4 9 Z M6 0 L10 4.5 L6 9 Z" fill="#fff" />
              </svg>
            </div>
          </div>
        </div>

        {/* side tabs */}
        <div className="flex w-[17px] shrink-0 flex-col bg-[#3c3c3c]">
          <SideTab className="h-[50px]" label="Trade" />
          <SideTab className="mt-[15px] h-[110px]" label="Times And Sales" />
          <SideTab className="mt-[9px] h-[88px]" label="Active Trader" />
          <SideTab className="mt-[8px] h-[79px]" label="Big Buttons" />
          <SideTab active className="mt-[8px] h-[44px]" label="Chart" />
          <SideTab className="mt-[16px] h-[77px]" label="Dashboard" />
          <SideTab className="mt-[6px] h-[55px]" label="Level II" />
          <SideTab className="mt-[7px] h-[73px]" label="Live News" />
        </div>
      </div>
    </div>
  )
}
